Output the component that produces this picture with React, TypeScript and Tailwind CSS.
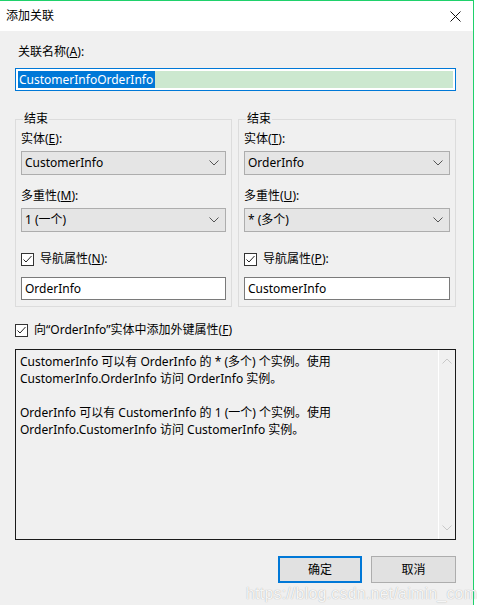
function Chevron({ up = false, color = '#555' }: { up?: boolean; color?: string }) {
  return (
    <svg width="10" height="6" viewBox="0 0 10 6" className={up ? 'rotate-180' : ''}>
      <polyline points="0.5,0.5 5,5 9.5,0.5" fill="none" stroke={color} strokeWidth="1" />
    </svg>
  )
}

function CheckBox() {
  return (
    <span className="w-[13px] h-[13px] border border-[#333] bg-white flex items-center justify-center shrink-0">
      <svg width="11" height="11" viewBox="0 0 11 11">
        <polyline points="1.5,5.5 4,8 9.5,2" fill="none" stroke="#222" strokeWidth="1" />
      </svg>
    </span>
  )
}

function Select({ value }: { value: string }) {
  return (
    <div className="h-[24px] border border-[#adadad] bg-[#e5e5e5] flex items-center justify-between pl-[3px] pr-[6px]">
      <span>{value}</span>
      <Chevron />
    </div>
  )
}

function EndGroup({
  entityKey,
  entity,
  multKey,
  mult,
  navKey,
  nav,
  className,
}: {
  entityKey: string
  entity: string
  multKey: string
  mult: string
  navKey: string
  nav: string
  className?: string
}) {
  return (
    <fieldset className={'border border-[#dcdcdc] px-[5px] pb-[6px] ' + (className ?? '')}>
      <legend className="ml-[2px] px-[1px] leading-[16px]">结束</legend>
      <div className="leading-[16px] mt-[4px]">
        实体(<u>{entityKey}</u>):
      </div>
      <div className="mt-[4px]">
        <Select value={entity} />
      </div>
      <div className="leading-[16px] mt-[13px]">
        多重性(<u>{multKey}</u>):
      </div>
      <div className="mt-[4px]">
        <Select value={mult} />
      </div>
      <div className="flex items-center gap-[6px] mt-[19px] leading-[16px]">
        <CheckBox />
        <span>
          导航属性(<u>{navKey}</u>):
        </span>
      </div>
      <div className="mt-[10px] h-[23px] border border-[#7a7a7a] bg-white flex items-center pl-[3px]">
        {nav}
      </div>
    </fieldset>
  )
}

export default function App() {
  return (
    <div className="w-[477px] h-[605px] bg-white relative overflow-hidden text-[12px] text-black font-['Noto_Sans','Noto_Sans_CJK_SC',sans-serif]">
      <div className="w-[474px] h-full border-t border-r border-[#1fd16b] flex flex-col">
        <div className="h-[30px] bg-white flex items-center justify-between pl-[6px] pr-[12px]">
          <span>添加关联</span>
          <svg width="11" height="11" viewBox="0 0 11 11">
            <path d="M0.5 0.5 L10.5 10.5 M10.5 0.5 L0.5 10.5" stroke="#111" strokeWidth="1" />
          </svg>
        </div>

        <div className="flex-1 bg-[#f0f0f0] pl-[15px] pr-[17px] flex flex-col">
          <div className="mt-[13px] pl-[3px] leading-[16px]">
            关联名称(<u>A</u>):
          </div>
          <div className="mt-[8px] h-[23px] border border-[#0078d7] bg-white p-[2px] flex">
            <div className="flex-1 bg-[#cce8cf] flex">
              <span className="bg-[#0078d7] text-white leading-[17px] pl-[1px] pr-[2px]">CustomerInfoOrderInfo</span>
            </div>
          </div>

          <div className="flex gap-[6px] mt-[20px]">
            <EndGroup
              className="w-[217px]"
              entityKey="E"
              entity="CustomerInfo"
              multKey="M"
              mult="1 (一个)"
              navKey="N"
              nav="OrderInfo"
            />
            <EndGroup
              className="flex-1"
              entityKey="T"
              entity="OrderInfo"
              multKey="U"
              mult="* (多个)"
              navKey="P"
              nav="CustomerInfo"
            />
          </div>

          <div className="flex items-center gap-[6px] mt-[15px] leading-[16px]">
            <CheckBox />
            <span>
              向“OrderInfo”实体中添加外键属性(<u>F</u>)
            </span>
          </div>

          <div className="mt-[11px] h-[191px] border border-[#1a1a1a] flex">
            <div className="flex-1 pl-[4px] pt-[3px] leading-[17px]">
              <p>CustomerInfo 可以有 OrderInfo 的 * (多个) 个实例。使用</p>
              <p>CustomerInfo.OrderInfo 访问 OrderInfo 实例。</p>
              <p className="h-[17px]"></p>
              <p>OrderInfo 可以有 CustomerInfo 的 1 (一个) 个实例。使用</p>
              <p>OrderInfo.CustomerInfo 访问 CustomerInfo 实例。</p>
            </div>
            <div className="w-[17px] border-l border-white flex flex-col items-center justify-between py-[8px]">
              <Chevron up color="#c8c8c8" />
              <Chevron color="#c8c8c8" />
            </div>
          </div>

          <div className="flex justify-end gap-[9px] mt-[16px]">
            <button className="w-[84px] h-[27px] border-2 border-[#0078d7] bg-[#e1e1e1]">确定</button>
            <button className="w-[85px] h-[27px] border border-[#adadad] bg-[#e1e1e1]">取消</button>
          </div>
        </div>
      </div>

      <div className="absolute left-[246px] top-[582px] text-[16px] text-white/90 font-['Liberation_Sans',sans-serif] [text-shadow:0_0_1px_#9a9a9a] tracking-[0.2px]">
        https://blog.csdn.net/aimin_com
      </div>
    </div>
  )
}
